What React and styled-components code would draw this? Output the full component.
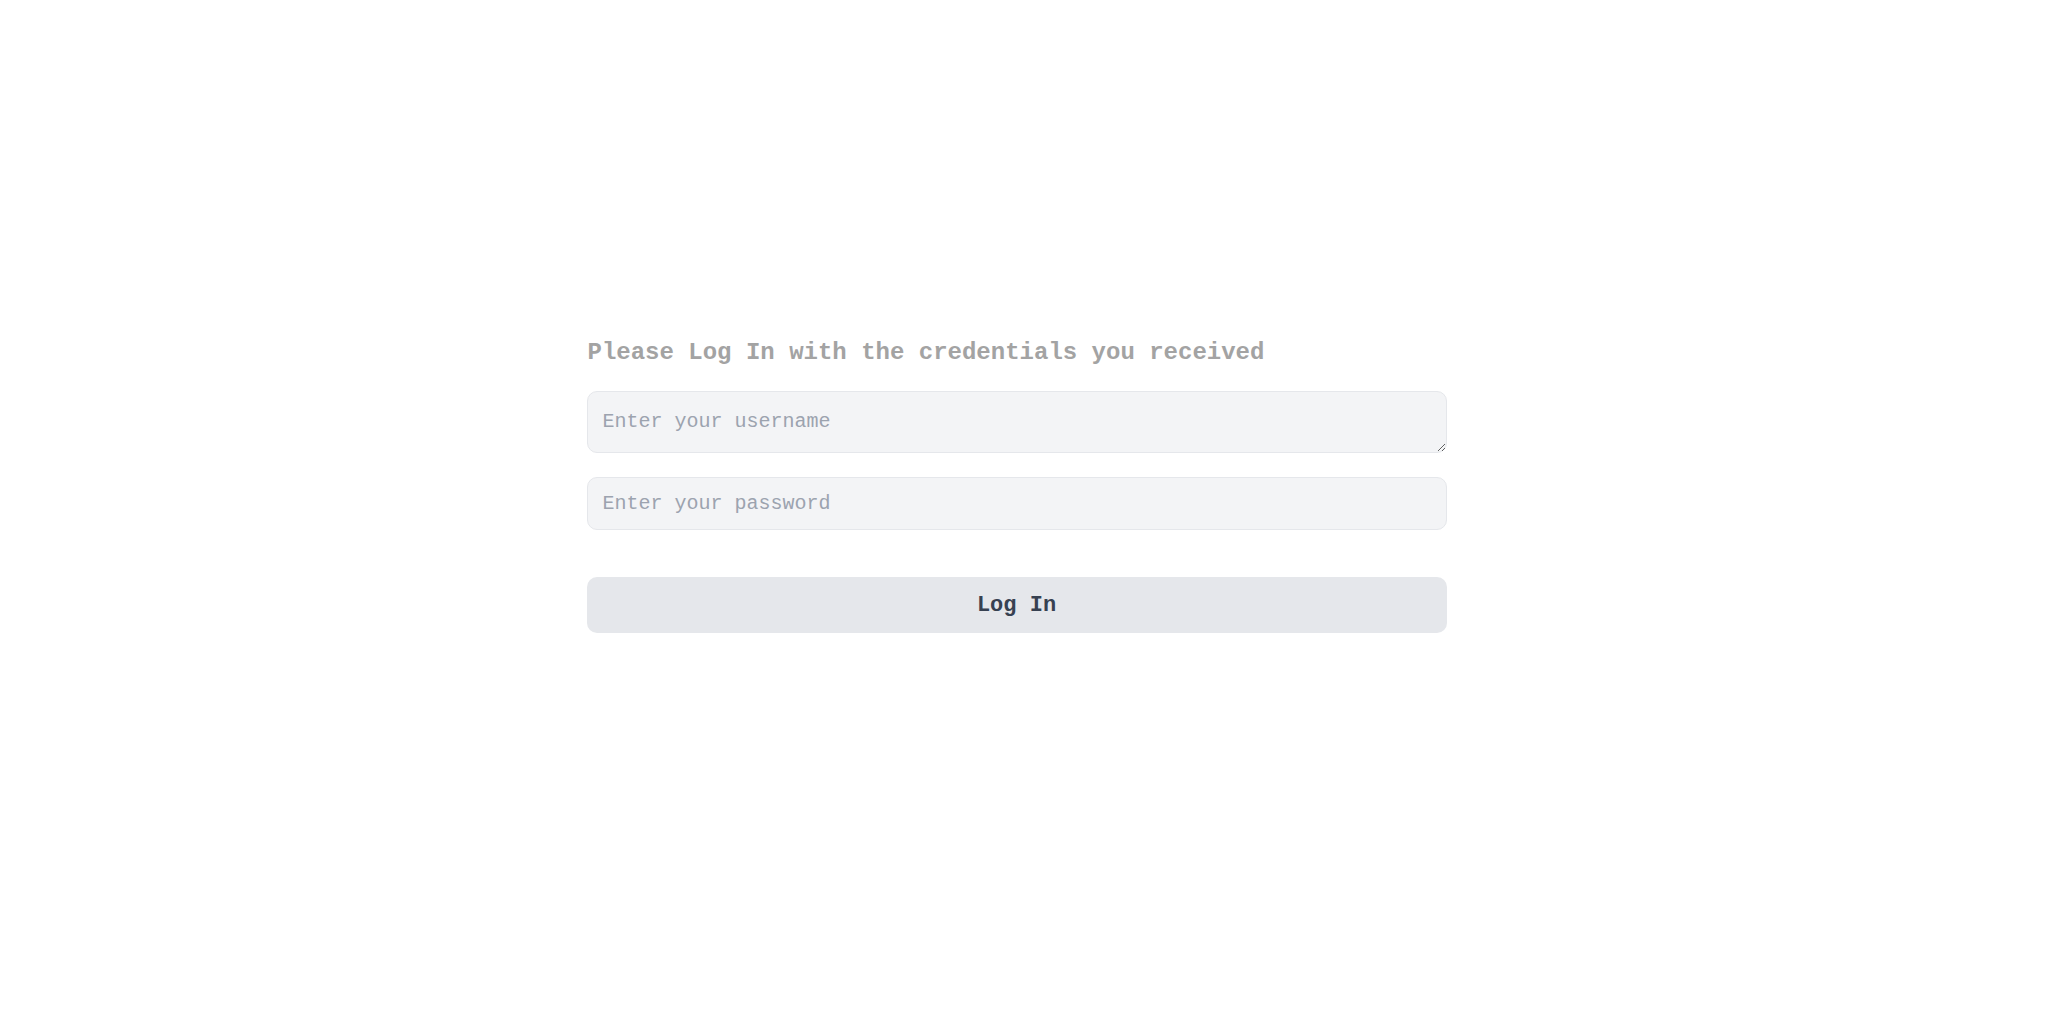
import React from "react";
import styled, { createGlobalStyle } from "styled-components";

const Global = createGlobalStyle`
  html, body { margin: 0; padding: 0; background: #ffffff; }
  body { font-family: "Liberation Mono", "Courier New", monospace; }
  * { box-sizing: border-box; }
`;

const Page = styled.main`
  min-height: 1029px;
  display: flex;
  justify-content: center;
  padding: 337px 15px 0 0;
`;

const Form = styled.form`
  width: 860px;
  display: flex;
  flex-direction: column;
`;

const Heading = styled.h2`
  margin: 0 0 22px 1px;
  font-family: "Liberation Mono", "Courier New", monospace;
  font-size: 24px;
  line-height: 32px;
  font-weight: 700;
  color: #a3a3a3;
`;

const fieldBase = `
  width: 100%;
  font-family: "Liberation Mono", "Courier New", monospace;
  font-size: 20px;
  color: #111827;
  background: #f3f4f6;
  border: 1px solid #e5e7eb;
  border-radius: 10px;
  outline: none;
  &::placeholder { color: #9ca3af; opacity: 1; }
`;

const TextArea = styled.textarea`
  ${fieldBase}
  display: block;
  height: 62px;
  padding: 16px 15px;
  line-height: 28px;
  resize: vertical;
`;

const Input = styled.input`
  ${fieldBase}
  display: block;
  height: 53px;
  padding: 0 15px;
  margin-top: 24px;
`;

const Button = styled.button`
  margin-top: 47px;
  height: 56px;
  width: 100%;
  border: none;
  border-radius: 10px;
  background: #e5e7eb;
  color: #374151;
  font-family: "Liberation Mono", "Courier New", monospace;
  font-size: 22px;
  font-weight: 700;
  cursor: pointer;
`;

export default function App() {
  return (
    <>
      <Global />
      <Page>
        <Form onSubmit={(e) => e.preventDefault()}>
          <Heading>Please Log In with the credentials you received</Heading>
          <TextArea rows={1} placeholder="Enter your username" />
          <Input type="password" placeholder="Enter your password" />
          <Button type="submit">Log In</Button>
        </Form>
      </Page>
    </>
  );
}
